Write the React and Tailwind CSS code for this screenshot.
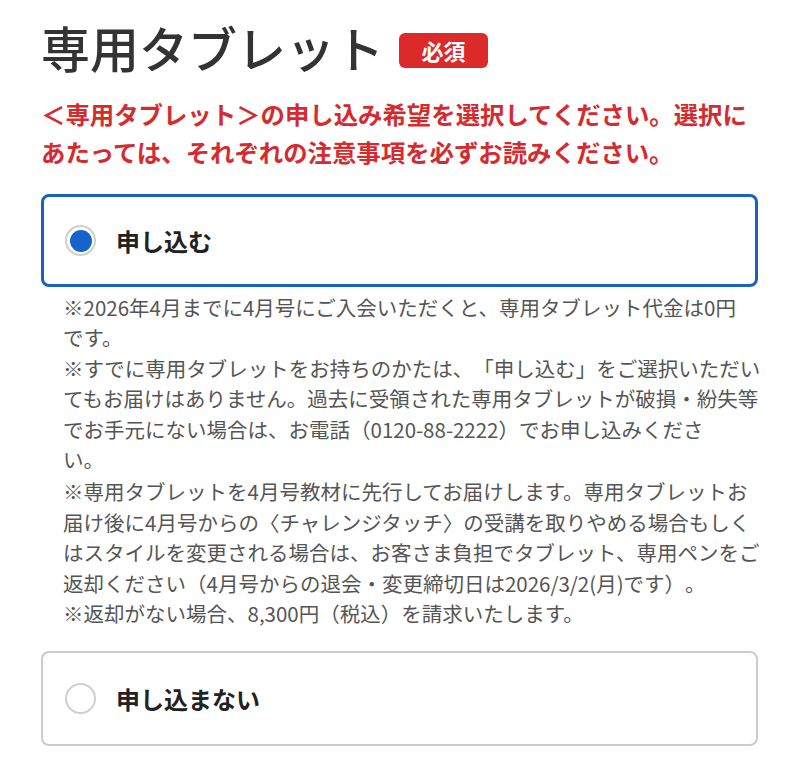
export default function App() {
  const font = {
    fontFamily: '"Noto Sans CJK JP", "Noto Sans", sans-serif',
  };

  return (
    <div className="min-h-[774px] bg-white [text-spacing-trim:space-all]" style={font}>
      <div className="pl-[41px] pr-[42px] pt-[18px] pb-[29px]">
        <div className="flex items-center gap-[15px]">
          <h1 className="text-[49px] leading-[58px] font-medium text-[#333]">
            専用タブレット
          </h1>
          <span className="mt-[6px] flex h-[35px] w-[89px] items-center justify-center rounded-[6px] bg-[#dc2a2a] text-[22px] font-bold text-white">
            必須
          </span>
        </div>

        <p className="mt-[19px] text-[24.4px] leading-[38px] font-bold text-[#d52b2f]">
          ＜専用タブレット＞の申し込み希望を選択してください。選択に
          <br />
          あたっては、それぞれの注意事項を必ずお読みください。
        </p>

        <label className="mt-[23px] flex h-[93px] items-center rounded-[8px] border-[3px] border-[#1a62c0] pl-[21px]">
          <span className="flex h-[31px] w-[31px] items-center justify-center rounded-full border-2 border-[#cfcfcf]">
            <span className="h-[22px] w-[22px] rounded-full bg-[#1565c8]" />
          </span>
          <span className="ml-[20px] text-[24px] font-bold text-[#222]">
            申し込む
          </span>
        </label>

        <div className="mt-[5px] pl-[22px] -mr-[20px] text-[20.5px] leading-[30.4px] text-[#555]">
          <p>
            ※2026年4月までに4月号にご入会いただくと、専用タブレット代金は0円
            <br />
            です。
          </p>
          <p>
            ※すでに専用タブレットをお持ちのかたは、「申し込む」をご選択いただい
            <br />
            てもお届けはありません。過去に受領された専用タブレットが破損・紛失等
            <br />
            でお手元にない場合は、お電話（0120-88-2222）でお申し込みくださ
            <br />
            い。
          </p>
          <p className="mt-[2px]">
            ※専用タブレットを4月号教材に先行してお届けします。専用タブレットお
            <br />
            届け後に4月号からの〈チャレンジタッチ〉の受講を取りやめる場合もしく
            <br />
            はスタイルを変更される場合は、お客さま負担でタブレット、専用ペンをご
            <br />
            返却ください（4月号からの退会・変更締切日は2026/3/2(月)です）。
          </p>
          <p>※返却がない場合、8,300円（税込）を請求いたします。</p>
        </div>

        <label className="mt-[23px] flex h-[95px] items-center rounded-[8px] border-2 border-[#cccccc] pl-[22px]">
          <span className="h-[31px] w-[31px] rounded-full border-2 border-[#cfcfcf]" />
          <span className="ml-[20px] text-[24px] font-bold text-[#222]">
            申し込まない
          </span>
        </label>
      </div>
    </div>
  );
}
